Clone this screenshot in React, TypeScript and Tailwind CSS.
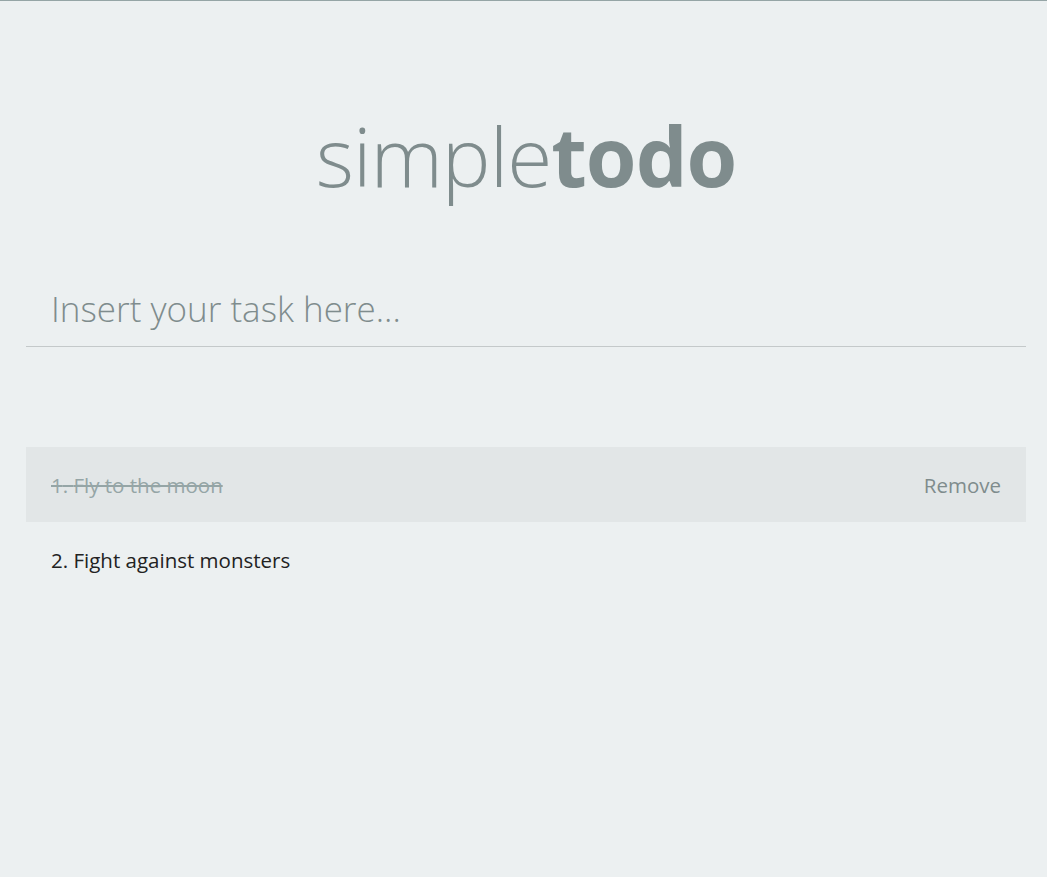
import { useState } from "react";

type Task = { id: number; text: string; done: boolean };

export default function App() {
  const [tasks, setTasks] = useState<Task[]>([
    { id: 1, text: "Fly to the moon", done: true },
    { id: 2, text: "Fight against monsters", done: false },
  ]);
  const [value, setValue] = useState("");
  const [hover, setHover] = useState<number | null>(1);

  function addTask(e: React.FormEvent) {
    e.preventDefault();
    if (!value.trim()) return;
    setTasks([...tasks, { id: Date.now(), text: value, done: false }]);
    setValue("");
  }

  return (
    <div
      className="min-h-screen bg-[#ecf0f1] border-t border-[#95a5a6] pb-10"
      style={{ fontFamily: '"Open Sans", "Noto Sans", sans-serif' }}
    >
      <div className="w-[1000px] ml-[26px]">
        <h1 className="pt-[98px] text-center text-[82px] leading-[112px] text-[#7f8c8d] tracking-[-1px]">
          <span className="font-light">simple</span>
          <span className="font-bold">todo</span>
        </h1>

        <form onSubmit={addTask} className="mt-[70px]">
          <input
            value={value}
            onChange={(e) => setValue(e.target.value)}
            placeholder="Insert your task here..."
            className="w-full bg-transparent border-b border-[#c4c9ca] px-[25px] pt-[2px] pb-[10px] text-[35px] font-light text-[#7f8c8d] placeholder:text-[#7f8c8d] outline-none"
          />
        </form>

        <ul className="mt-[100px]">
          {tasks.map((t, i) => (
            <li
              key={t.id}
              onMouseEnter={() => setHover(t.id)}
              onClick={() =>
                setTasks(tasks.map((x) => (x.id === t.id ? { ...x, done: !x.done } : x)))
              }
              className={
                "flex items-center justify-between h-[75px] px-[25px] pt-[2px] text-[20.5px] cursor-pointer " +
                (hover === t.id ? "bg-[#e2e6e7]" : "")
              }
            >
              <span className={t.done ? "line-through text-[#95a5a6]" : "text-[#222]"}>
                {i + 1}. {t.text}
              </span>
              {hover === t.id && (
                <button
                  onClick={(e) => {
                    e.stopPropagation();
                    setTasks(tasks.filter((x) => x.id !== t.id));
                  }}
                  className="text-[#7f8c8d]"
                >
                  Remove
                </button>
              )}
            </li>
          ))}
        </ul>
      </div>
    </div>
  );
}
